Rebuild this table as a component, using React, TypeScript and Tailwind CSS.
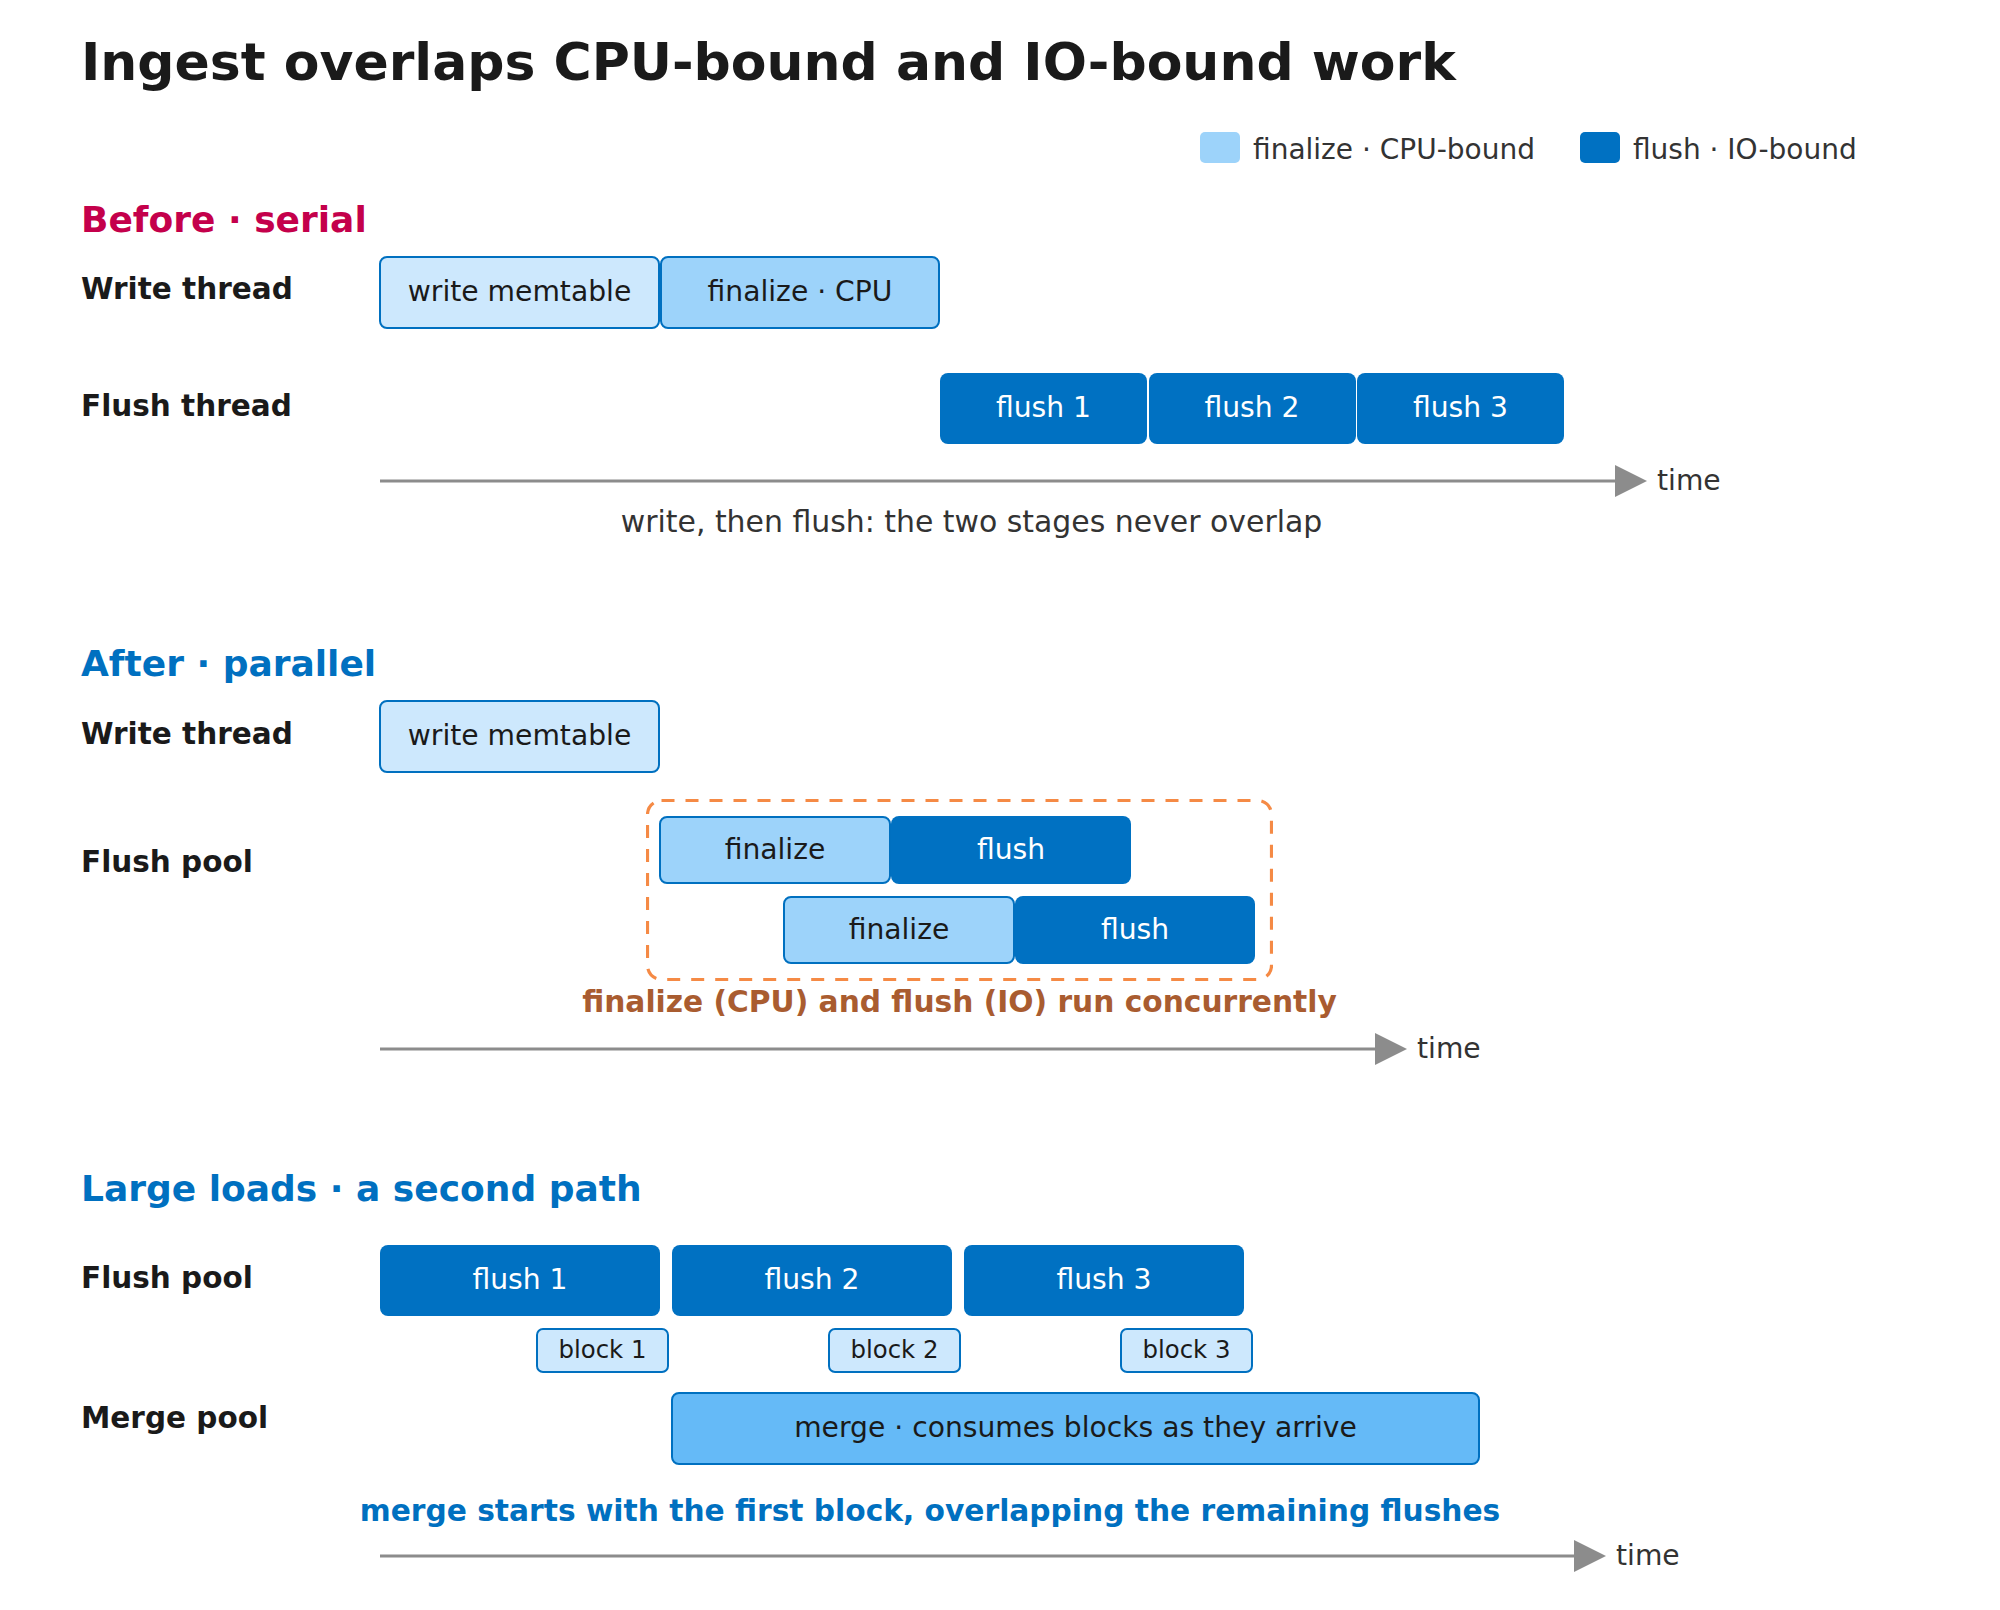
import React from "react";

// Ingest timeline diagram: three sections, label column + time track
const PALE = "bg-[#cde8fd] border-2 border-[#0070c0] text-[#1a1a1a]";
const MID = "bg-[#9dd3fa] border-2 border-[#0070c0] text-[#1a1a1a]";
const DARK = "bg-[#0071c2] text-white";
const MERGE = "bg-[#65baf7] border-2 border-[#0070c0] text-[#1a1a1a]";

function Box({ className, children }: { className: string; children: React.ReactNode }) {
  return (
    <div
      className={`flex shrink-0 items-center justify-center rounded-[8px] text-[28.2px] leading-none whitespace-nowrap ${className}`}
    >
      {children}
    </div>
  );
}

function Label({ className, children }: { className: string; children: React.ReactNode }) {
  return (
    <div className={`w-[298px] shrink-0 text-[29.5px] font-bold leading-none text-[#1a1a1a] ${className}`}>
      {children}
    </div>
  );
}

function Axis({ width, className }: { width: number; className: string }) {
  return (
    <div className={`flex items-start pl-[298px] ${className}`}>
      <svg width={width} height={32} className="shrink-0">
        <line x1={1} y1={16} x2={width - 30} y2={16} stroke="#8c8c8c" strokeWidth={3} />
        <polygon points={`${width - 32},0 ${width},16 ${width - 32},32`} fill="#8c8c8c" />
      </svg>
      <span className="ml-[10px] mt-[2px] text-[28.2px] leading-none text-[#333]">time</span>
    </div>
  );
}

export default function App() {
  return (
    <div className="h-[1610px] w-[2000px] overflow-hidden bg-white pl-[81px] pt-[36px] font-['DejaVu_Sans',sans-serif]">
      <h1 className="text-[52px] font-bold leading-none text-[#1a1a1a] whitespace-nowrap">
        Ingest overlaps CPU-bound and IO-bound work
      </h1>

      {/* Legend */}
      <div className="mt-[44px] flex items-start pl-[1119px]">
        <div className="h-[31px] w-[40px] shrink-0 rounded-[5px] bg-[#9dd3fa]" />
        <span className="ml-[13px] mt-[4px] text-[28px] leading-none text-[#333] whitespace-nowrap">
          finalize · CPU-bound
        </span>
        <div className="ml-[45px] h-[31px] w-[40px] shrink-0 rounded-[5px] bg-[#0071c2]" />
        <span className="ml-[13px] mt-[4px] text-[28px] leading-none text-[#333] whitespace-nowrap">
          flush · IO-bound
        </span>
      </div>

      {/* Before */}
      <div className="mt-[38px] text-[36px] font-bold leading-none text-[#c4004b]">Before · serial</div>
      <div className="mt-[18px] flex">
        <Label className="pt-[19px]">Write thread</Label>
        <div className="flex">
          <Box className={`h-[73px] w-[281px] ${PALE}`}>write memtable</Box>
          <Box className={`h-[73px] w-[280px] ${MID}`}>finalize · CPU</Box>
        </div>
      </div>
      <div className="mt-[44px] flex">
        <Label className="pt-[19px]">Flush thread</Label>
        <div className="ml-[561px] flex gap-[1.5px]">
          <Box className={`h-[71px] w-[207px] ${DARK}`}>flush 1</Box>
          <Box className={`h-[71px] w-[207px] ${DARK}`}>flush 2</Box>
          <Box className={`h-[71px] w-[207px] ${DARK}`}>flush 3</Box>
        </div>
      </div>
      <Axis width={1268} className="mt-[21px]" />
      <div className="mt-[10px] flex pl-[298px]">
        <div className="flex w-[1185px] justify-center text-[29.9px] leading-none text-[#333] whitespace-nowrap">
          write, then flush: the two stages never overlap
        </div>
      </div>

      {/* After */}
      <div className="mt-[109px] text-[36px] font-bold leading-none text-[#0070c0]">After · parallel</div>
      <div className="mt-[18px] flex">
        <Label className="pt-[20px]">Write thread</Label>
        <Box className={`h-[73px] w-[281px] ${PALE}`}>write memtable</Box>
      </div>
      <div className="mt-[26px] flex">
        <Label className="pt-[49px]">Flush pool</Label>
        <div className="relative ml-[267px] h-[182px] w-[627px] pl-[13px] pt-[17px]">
          <svg width={627} height={182} className="absolute inset-0">
            <rect
              x={1.5}
              y={1.5}
              width={624}
              height={179}
              rx={14}
              fill="none"
              stroke="#f58a45"
              strokeWidth={3.2}
              strokeDasharray="13 11"
            />
          </svg>
          <div className="relative flex">
            <Box className={`h-[68px] w-[232px] ${MID}`}>finalize</Box>
            <Box className={`h-[68px] w-[240px] ${DARK}`}>flush</Box>
          </div>
          <div className="relative mt-[12px] ml-[124px] flex">
            <Box className={`h-[68px] w-[232px] ${MID}`}>finalize</Box>
            <Box className={`h-[68px] w-[240px] ${DARK}`}>flush</Box>
          </div>
        </div>
      </div>
      <div className="mt-[6px] flex pl-[565px]">
        <div className="flex w-[627px] justify-center text-[29.7px] font-bold leading-none text-[#a95c30] whitespace-nowrap">
          finalize (CPU) and flush (IO) run concurrently
        </div>
      </div>
      <Axis width={1028} className="mt-[16px]" />

      {/* Large loads */}
      <div className="mt-[106px] text-[36px] font-bold leading-none text-[#0070c0]">
        Large loads · a second path
      </div>
      <div className="mt-[38px] flex">
        <Label className="pt-[19px]">Flush pool</Label>
        <div className="ml-[1px] flex gap-[12px]">
          <Box className={`h-[71px] w-[280px] ${DARK}`}>flush 1</Box>
          <Box className={`h-[71px] w-[280px] ${DARK}`}>flush 2</Box>
          <Box className={`h-[71px] w-[280px] ${DARK}`}>flush 3</Box>
        </div>
      </div>
      <div className="mt-[12px] flex pl-[455px] gap-[159px]">
        {["block 1", "block 2", "block 3"].map((b) => (
          <div
            key={b}
            className="flex h-[45px] w-[133px] shrink-0 items-center justify-center rounded-[7px] border-2 border-[#0070c0] bg-[#cde8fd] text-[24.4px] leading-none text-[#1a1a1a]"
          >
            {b}
          </div>
        ))}
      </div>
      <div className="mt-[19px] flex">
        <Label className="pt-[12px]">Merge pool</Label>
        <Box className={`ml-[292px] h-[73px] w-[809px] ${MERGE}`}>merge · consumes blocks as they arrive</Box>
      </div>
      <div className="mt-[31px] flex pl-[299px]">
        <div className="flex w-[1100px] justify-center text-[29.7px] font-bold leading-none text-[#0070c0] whitespace-nowrap">
          merge starts with the first block, overlapping the remaining flushes
        </div>
      </div>
      <Axis width={1227} className="mt-[15px]" />
    </div>
  );
}
